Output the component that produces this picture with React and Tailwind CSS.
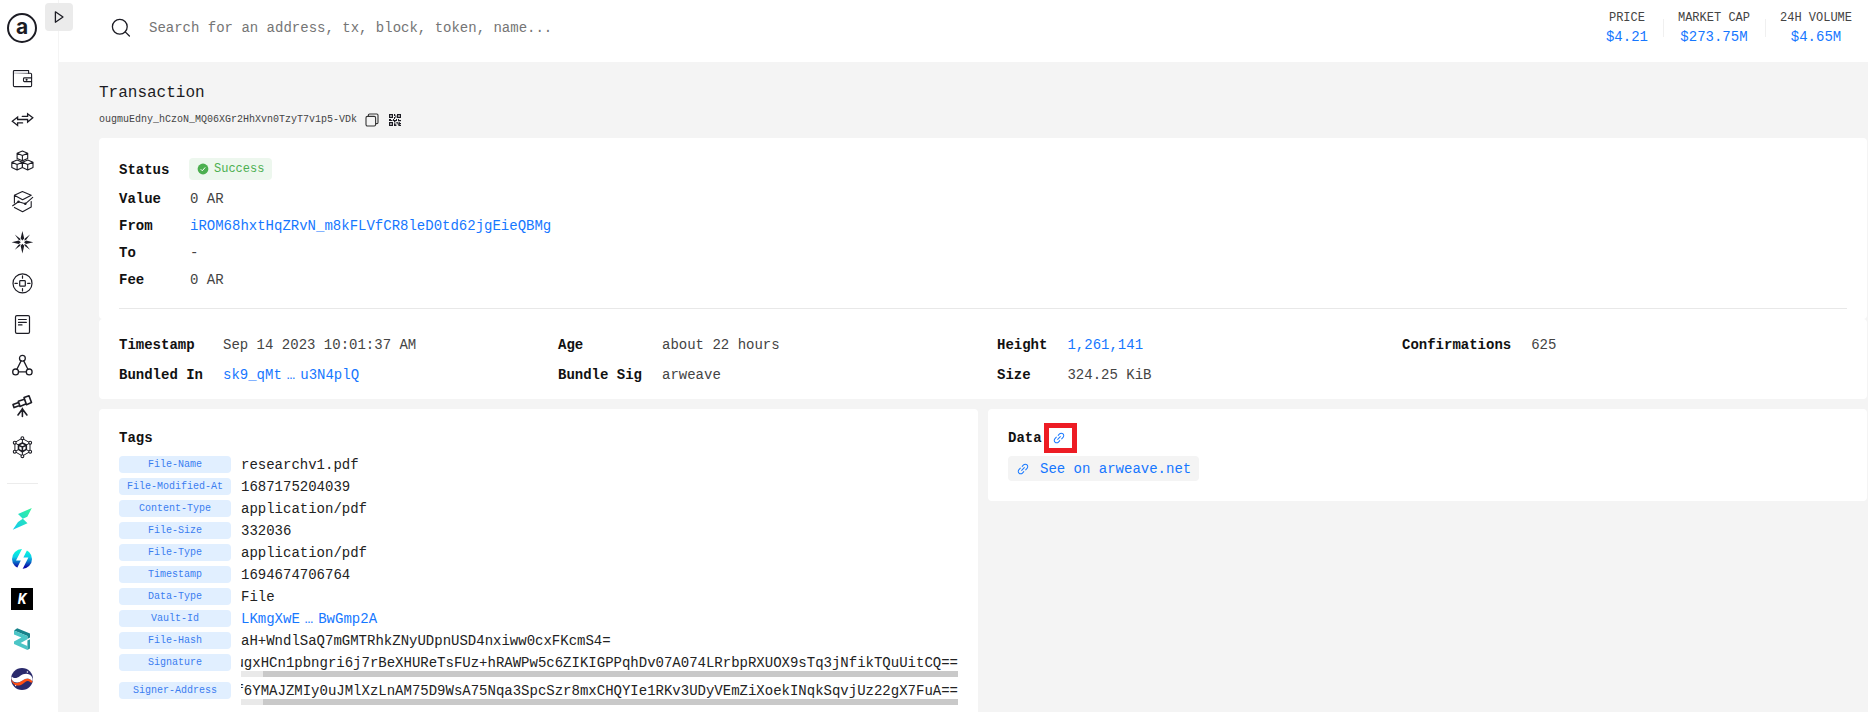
import React from "react";
import { AiOutlineLink } from "react-icons/ai";

function Icon({ children }) {
  return (
    <svg
      viewBox="0 0 24 24"
      className="size-6"
      fill="none"
      stroke="#1c1c24"
      strokeWidth="1.1"
      strokeLinejoin="round"
      strokeLinecap="round"
      aria-hidden="true"
    >
      {children}
    </svg>
  );
}

function Cube({ x, y }) {
  return (
    <path
      transform={`translate(${x} ${y})`}
      d="M0-4.8 5.3-2.6V2.6L0 5-5.3 2.6V-2.6ZM-5.3-2.6 0-.3 5.3-2.6M0-.3V5"
    />
  );
}

const NAV = [
  {
    name: "Wallets",
    icon: (
      <Icon>
        <rect x="3.4" y="7.2" width="18.2" height="13.4" rx="1.2" />
        <path d="M3.4 8V5.4Q3.4 4.5 4.4 4.5H18.6V7.2" fill="#e4e4e8" />
        <path d="M21.6 11.9H14.4Q13.5 11.9 13.5 12.8V14.7Q13.5 15.6 14.4 15.6H21.6" />
        <circle cx="16.6" cy="13.7" r=".5" fill="#1c1c24" />
      </Icon>
    ),
  },
  {
    name: "Transactions",
    icon: (
      <Icon>
        <path strokeWidth="1.3" strokeLinejoin="miter" d="M12.3 9.4H17.6V6.8L22.8 10.8 17.6 15.1V12.5H7.6V10.1L2.3 14.3 7.6 18.5V15.9H12.6" />
      </Icon>
    ),
  },
  {
    name: "Blocks",
    icon: (
      <Icon>
        <Cube x={12.4} y={7.8} />
        <Cube x={7.1} y={16.9} />
        <Cube x={17.7} y={16.9} />
      </Icon>
    ),
  },
  {
    name: "Statistics",
    icon: (
      <Icon>
        <path d="M4.4 14V6.2L12.4 2.6 21.2 6.2 12.6 10.8 4.4 6.2M21.2 12.5V18L12.6 22.7 4.4 18.4" />
        <path d="M2.7 16.8 8.5 12.7 15.3 14.8 22.7 8.3" />
        <circle cx="8.5" cy="12.7" r=".7" fill="#1c1c24" />
        <circle cx="15.3" cy="14.8" r=".7" fill="#1c1c24" />
      </Icon>
    ),
  },
  {
    name: "Explore",
    icon: (
      <Icon>
        <path
          stroke="none"
          fill="#1c1c24"
          d="M12.4 1 14.2 8.6 12.4 10.6 10.6 8.6ZM12.4 23.4 14.2 15.8 12.4 13.8 10.6 15.8ZM1.6 12.2 8.8 10.4 10.8 12.2 8.8 14ZM23.2 12.2 16 10.4 14 12.2 16 14Z"
        />
        <path
          stroke="none"
          fill="#1c1c24"
          d="M4.8 4.6 9.9 8.4 10.6 10.4 8.6 9.7ZM20 4.6 14.9 8.4 14.2 10.4 16.2 9.7ZM4.8 19.8 9.9 16 10.6 14 8.6 14.7ZM20 19.8 14.9 16 14.2 14 16.2 14.7Z"
        />
      </Icon>
    ),
  },
  {
    name: "Tokens",
    icon: (
      <Icon>
        <circle cx="12.5" cy="12.4" r="9.5" strokeWidth="1.2" />
        <rect x="9.7" y="9.6" width="5.6" height="5.6" rx=".8" strokeWidth="1.2" />
        <path d="M12.5 4.9V7.2M12.5 17.6V19.9M5 12.4H7.3M17.7 12.4H20" strokeWidth="1.2" />
      </Icon>
    ),
  },
  {
    name: "Contracts",
    icon: (
      <Icon>
        <rect x="5.5" y="3.6" width="14" height="17.8" rx="1.4" strokeWidth="1.2" />
        <path d="M8.5 7.5H16.3M8.5 10.4H16.3M8.5 12.9H12" strokeWidth="1.2" />
      </Icon>
    ),
  },
  {
    name: "Nodes",
    icon: (
      <Icon>
        <g strokeWidth="1.3">
          <circle cx="12.4" cy="5.2" r="2.9" />
          <circle cx="5.6" cy="18.9" r="2.9" />
          <circle cx="19.2" cy="18.9" r="2.9" />
          <path d="M11.1 7.9 6.9 16.3M13.7 7.9 17.9 16.3M8.5 18.9H16.3" />
        </g>
      </Icon>
    ),
  },
  {
    name: "Observatory",
    icon: (
      <Icon>
        <g strokeWidth="1.6">
          <path d="M14 3.6 19 1.8 21.5 8.6 16.5 10.7ZM8.3 7.2 14.4 5.2 16.2 9.8 10 12.4ZM3 10.6 8.6 8.4 9.7 11.4 4.1 13.6Z" />
          <path d="M12.4 14.4V22.4M12.4 15 8 21M12.4 15 16.9 21" />
        </g>
      </Icon>
    ),
  },
  {
    name: "Network",
    icon: (
      <Icon>
        <path strokeWidth="1" d="M12.4 3.5 20 7.8V16.6L12.4 21 4.9 16.6V7.8ZM4.9 7.8 8.5 10M20 7.8 16.4 10M4.9 16.6 8.5 14.6M20 16.6 16.4 14.6M12.4 3.5V7.8M12.4 16.8V21" />
        <g fill="#fff">
          <circle cx="12.4" cy="3.2" r="1.4" />
          <circle cx="20.2" cy="7.7" r="1.4" />
          <circle cx="20.2" cy="16.7" r="1.4" />
          <circle cx="12.4" cy="21.2" r="1.4" />
          <circle cx="4.7" cy="16.7" r="1.4" />
          <circle cx="4.7" cy="7.7" r="1.4" />
        </g>
        <path strokeWidth="1.6" d="M12.4 8 16.3 10V14.4L12.4 16.7 8.5 14.4V10ZM8.5 10 12.4 12.1 16.3 10M12.4 12.1V16.7" />
      </Icon>
    ),
  },
];

const APPS = [
  {
    name: "Thor",
    icon: (
      <svg viewBox="0 0 24 24" className="size-6" aria-hidden="true">
        <linearGradient id="thor" x1="0" y1="1" x2="1" y2="0">
          <stop offset="0" stopColor="#12c9f0" />
          <stop offset="1" stopColor="#35f59a" />
        </linearGradient>
        <path fill="url(#thor)" d="M21.8 1 8 7 12.8 11.8 17.3 9.8ZM12.8 11.8 17.5 16.3 2.8 22.8 8 15Z" />
      </svg>
    ),
  },
  {
    name: "Swap",
    icon: (
      <svg viewBox="0 0 24 24" className="size-6" aria-hidden="true">
        <linearGradient id="swap" x1="0" y1="0" x2="0" y2="1">
          <stop offset="0.1" stopColor="#08f5dc" />
          <stop offset="0.4" stopColor="#0bd0e8" />
          <stop offset="0.9" stopColor="#0a0aa8" />
        </linearGradient>
        <circle cx="12" cy="12" r="10" fill="url(#swap)" />
        <path fill="#fff" d="M13 0 6 13.6H10.8L5.6 24H11.6L18.4 10.6H13.4L18.6 0Z" />
      </svg>
    ),
  },
  {
    name: "K",
    icon: (
      <span className="mx-px flex size-[22px] items-center justify-center bg-black font-[Roboto,sans-serif] text-sm leading-none font-bold text-white italic">
        K
      </span>
    ),
  },
  {
    name: "Zil",
    icon: (
      <svg viewBox="0 0 24 24" className="size-6" aria-hidden="true">
        <path fill="#17828a" d="M4 3.4 7.2 1.2 20 6.6V10.6L17.4 12V9Z" />
        <path fill="#4bc5c6" d="M4 3.4 17.4 9V12.2L10.6 16 17.4 19V23L4 17V14.4L11.4 10.6 4 7.4Z" />
        <path fill="#2a9ea4" d="M17.4 13.6 20 12.2V21.4L17.4 23Z" />
      </svg>
    ),
  },
  {
    name: "Planet",
    icon: (
      <svg viewBox="0 0 24 24" className="size-6" aria-hidden="true">
        <circle cx="12" cy="12" r="11" fill="#2a2a6c" />
        <path fill="#ff4f12" d="M1.4 12C3.4 17 7.6 17.2 12.4 13.6 16 10.8 19.4 10.4 22.6 14.4 21.6 15.8 21 16 20.4 15.2 17.4 12.6 15.6 14.6 12.6 17 8.4 20 3.8 18.6 1.8 14.4 1.3 13.4 1.3 12.6 1.4 12Z" />
        <path fill="#fff" d="M1.8 9.4C4 11.8 6.6 11.6 10 9 14.2 6 19.4 6 22 10 23 12 22.8 13 22.4 14.4 19.4 10.4 16 10.8 12.4 13.6 8.2 16.8 3.4 16 1.4 12 1.2 11 1.4 10.2 1.8 9.4Z" />
        <circle cx="17.4" cy="5" r=".8" fill="#fff" />
        <circle cx="5.6" cy="18.6" r=".6" fill="#fff" />
      </svg>
    ),
  },
];

const MARKET = [
  ["PRICE", "$4.21"],
  ["MARKET CAP", "$273.75M"],
  ["24H VOLUME", "$4.65M"],
];

const DETAILS = [
  [
    ["Timestamp", "Sep 14 2023 10:01:37 AM"],
    ["Bundled In", <ShortLink key="b" start="sk9_qMt" end="u3N4plQ" />],
  ],
  [
    ["Age", "about 22 hours"],
    ["Bundle Sig", "arweave"],
  ],
  [
    ["Height", <a key="h" href="#height" className="text-[#1677ff]">1,261,141</a>],
    ["Size", "324.25 KiB"],
  ],
  [["Confirmations", "625"]],
];

const TAGS = [
  ["File-Name", "researchv1.pdf"],
  ["File-Modified-At", "1687175204039"],
  ["Content-Type", "application/pdf"],
  ["File-Size", "332036"],
  ["File-Type", "application/pdf"],
  ["Timestamp", "1694674706764"],
  ["Data-Type", "File"],
  ["Vault-Id", <ShortLink key="v" start="LKmgXwE" end="BwGmp2A" />],
  ["File-Hash", "aH+WndlSaQ7mGMTRhkZNyUDpnUSD4nxiww0cxFKcmS4="],
];

const LONG_TAGS = [
  ["Signature", "ugxHCn1pbngri6j7rBeXHUReTsFUz+hRAWPw5c6ZIKIGPPqhDv07A074LRrbpRXUOX9sTq3jNfikTQuUitCQ=="],
  ["Signer-Address", "f6YMAJZMIy0uJMlXzLnAM75D9WsA75Nqa3SpcSzr8mxCHQYIe1RKv3UDyVEmZiXoekINqkSqvjUz22gX7FuA=="],
];

function ShortLink({ start, end }) {
  return (
    <a href="#short" className="flex gap-[5px] text-[#1677ff]">
      <span>{start}</span>
      <span>…</span>
      <span>{end}</span>
    </a>
  );
}

function Field({ label, children }) {
  return (
    <div className="flex h-[27px] items-center pt-[2px]">
      <dt className="w-[71px] font-bold text-[#111]">{label}</dt>
      <dd>{children}</dd>
    </div>
  );
}

function TagName({ children }) {
  return (
    <dt className="h-[17px] w-28 shrink-0 rounded bg-[#e1efff] text-center text-[10px] leading-[18px] text-[#3b7df0]">
      {children}
    </dt>
  );
}

function Sidebar() {
  return (
    <aside className="w-[59px] shrink-0 border-r border-[#f4f4f4] bg-white">
      <a
        href="#home"
        className="mt-[13px] ml-[7px] flex size-[30px] items-center justify-center rounded-full border-2 border-[#1c1c24] pb-1 font-[Inter,sans-serif] text-[21px] leading-none font-bold text-[#1c1c24]"
      >
        a
      </a>
      <nav className="mt-[23px] flex flex-col gap-[17px] pl-[10px]">
        {NAV.map((n) => (
          <a key={n.name} href="#nav" aria-label={n.name} className="w-6">
            {n.icon}
          </a>
        ))}
      </nav>
      <hr className="mt-6 ml-[7px] w-[31px] border-[#ececec]" />
      <nav className="mt-[23px] flex flex-col gap-4 pl-[10px]">
        {APPS.map((n) => (
          <a key={n.name} href="#app" aria-label={n.name} className="flex size-6 items-center">
            {n.icon}
          </a>
        ))}
      </nav>
    </aside>
  );
}

function Header() {
  return (
    <header className="flex h-[62px] shrink-0 items-start justify-between bg-white pr-4">
      <label className="flex grow items-center gap-4 pt-4 pl-[50px]">
        <svg viewBox="0 0 24 24" className="size-6" fill="none" stroke="#1c1c24" strokeWidth="1.3" strokeLinecap="round" aria-hidden="true">
          <circle cx="10.8" cy="10.7" r="7.4" />
          <path d="M16.2 15.9 20.4 20" />
        </svg>
        <input
          type="text"
          aria-label="Search"
          placeholder="Search for an address, tx, block, token, name..."
          className="h-5 w-[500px] bg-transparent outline-none placeholder:text-[#757575]"
        />
      </label>
      <dl className="flex pt-[9px]">
        {MARKET.map(([k, v], i) => (
          <div key={k} className="flex items-center">
            {i > 0 && <span className="mr-[14px] ml-[15px] h-[18px] w-px bg-[#f0f0f0]" />}
            <div className="text-center">
              <dt className="text-xs leading-[18px] text-[#444]">{k}</dt>
              <dd className="leading-5 text-[#1677ff]">{v}</dd>
            </div>
          </div>
        ))}
      </dl>
    </header>
  );
}

function Summary() {
  return (
    <>
      <section className="rounded bg-white px-5 pt-5 pb-[10px]">
        <dl>
          <div className="mb-1 flex h-[22px] items-center">
            <dt className="w-[70px] pt-[2px] font-bold text-[#111]">Status</dt>
            <dd className="flex h-[22px] items-center gap-[5px] rounded bg-[#edf7ee] px-2 text-xs text-[#4caf50]">
              <svg viewBox="0 0 12 12" className="size-3" aria-hidden="true">
                <circle cx="6" cy="6" r="5.4" fill="#4caf50" />
                <path d="M3.7 6.2 5.3 7.8 8.2 4.4" fill="none" stroke="#fff" strokeWidth="1" />
              </svg>
              Success
            </dd>
          </div>
          <Field label="Value">0 AR</Field>
          <Field label="From">
            <a href="#from" className="text-[#1677ff]">iROM68hxtHqZRvN_m8kFLVfCR8leD0td62jgEieQBMg</a>
          </Field>
          <Field label="To">-</Field>
          <Field label="Fee">0 AR</Field>
        </dl>
        <hr className="mt-4 border-[#e8e8e8]" />
      </section>
      <section className="grid grid-cols-[439fr_439fr_405fr_445fr] rounded bg-white px-5 pt-[11px] pb-[9px]">
        {DETAILS.map((col, i) => (
          <dl key={i} className="grid auto-rows-[30px] grid-cols-[auto_1fr] content-start items-center gap-x-5">
            {col.map(([k, v]) => (
              <React.Fragment key={k}>
                <dt className="font-bold text-[#111]">{k}</dt>
                <dd>{v}</dd>
              </React.Fragment>
            ))}
          </dl>
        ))}
      </section>
    </>
  );
}

function Tags() {
  return (
    <section className="min-w-0 rounded bg-white px-5 pt-[19px] pb-5">
      <h2 className="font-bold text-[#111]">Tags</h2>
      <dl className="mt-2 flex flex-col gap-[5px] text-[#222]">
        {TAGS.map(([k, v]) => (
          <div key={k} className="flex gap-[10px]">
            <TagName>{k}</TagName>
            <dd className="h-[17px] leading-[19px]">{v}</dd>
          </div>
        ))}
        {LONG_TAGS.map(([k, v]) => (
          <div key={k} className="flex gap-[10px]">
            <TagName>{k}</TagName>
            <dd className="min-w-0 grow leading-[19px]">
              <div className="flex h-[17px] justify-end overflow-hidden whitespace-nowrap">
                <span>{v}</span>
              </div>
              <div className="flex h-[6px] justify-end bg-[#e9e9e9]">
                <div className="w-[97%] bg-[#c9c9c9]" />
              </div>
            </dd>
          </div>
        ))}
      </dl>
    </section>
  );
}

function Data() {
  return (
    <section className="self-start rounded bg-white px-5 pt-[19px] pb-5">
      <div className="flex items-center">
        <h2 className="font-bold text-[#111]">Data</h2>
        <a href="#data" aria-label="Open data" className="relative ml-[10px] text-[#1677ff]">
          <AiOutlineLink className="size-[14px]" />
          <span className="absolute -top-2 -left-2 h-[30px] w-[33px] border-[5px] border-[#ed1c24]" />
        </a>
      </div>
      <a
        href="#arweave"
        className="mt-2 inline-flex h-[25px] items-center gap-[10px] rounded bg-[#f4f4f4] px-2 align-top text-[#1677ff]"
      >
        <AiOutlineLink className="size-[14px]" />
        See on arweave.net
      </a>
    </section>
  );
}

export default function App() {
  return (
    <div className="relative flex h-screen overflow-hidden bg-[#f4f4f4] font-['Liberation_Mono',monospace] text-sm leading-5 text-[#444]">
      <Sidebar />
      <button
        type="button"
        aria-label="Expand menu"
        className="absolute top-[3px] left-[45px] flex size-7 items-center justify-center rounded bg-[#ebebeb]"
      >
        <svg viewBox="0 0 14 14" className="size-[14px]" fill="none" stroke="#1c1c24" strokeWidth="1.3" strokeLinejoin="round" aria-hidden="true">
          <path d="M3.4 1.8 11 7 3.4 12.2Z" />
        </svg>
      </button>
      <div className="flex min-w-0 grow flex-col">
        <Header />
        <main className="grow overflow-y-auto pt-[19px] pr-px pl-10 [scrollbar-width:none]">
          <h1 className="text-base leading-6 text-[#1c1c24]">Transaction</h1>
          <div className="mt-[7px] mb-[10px] flex h-4 items-center text-[10px] leading-4">
            <span>ougmuEdny_hCzoN_MQ06XGr2HhXvn0TzyT7v1p5-VDk</span>
            <button type="button" aria-label="Copy" className="ml-2">
              <svg viewBox="0 0 14 14" className="size-[14px]" fill="none" stroke="#333" strokeWidth="1.1" aria-hidden="true">
                <rect x="1" y="3.4" width="9.6" height="9.6" rx="1.4" />
                <path d="M3.4 3.2V2.2Q3.4 1 4.6 1H11.8Q13 1 13 2.2V9.4Q13 10.6 11.8 10.6H10.8" />
              </svg>
            </button>
            <button type="button" aria-label="QR code" className="ml-[10px]">
              <svg viewBox="0 0 12 12" className="size-3" fill="#1c1c24" fillRule="evenodd" aria-hidden="true">
                <path d="M0 0H4V4H0ZM1.2 1.2V2.8H2.8V1.2ZM8 0H12V4H8ZM9.2 1.2V2.8H10.8V1.2ZM0 8H4V12H0ZM1.2 9.2V10.8H2.8V9.2ZM5 0H6.2V2H5ZM6.4 1.6H7.4V3.6H6V5H5V3H6.4ZM0 5H2V6H3.4V7H0ZM4 5H5V6H7V5H8V7H6.4V8.4H5V7H4ZM9 5H10V6H12V7.2H9ZM5 9.2H6.4V10.4H7.4V12H5ZM7.4 8H8.8V9.6H7.4ZM9.6 8H10.8V9H12V10.2H10.8V11H12V12H9.4V10.6H8.6V9.6H9.6Z" />
              </svg>
            </button>
          </div>
          <Summary />
          <div className="mt-[10px] grid grid-cols-2 gap-[10px]">
            <Tags />
            <Data />
          </div>
        </main>
      </div>
    </div>
  );
}
